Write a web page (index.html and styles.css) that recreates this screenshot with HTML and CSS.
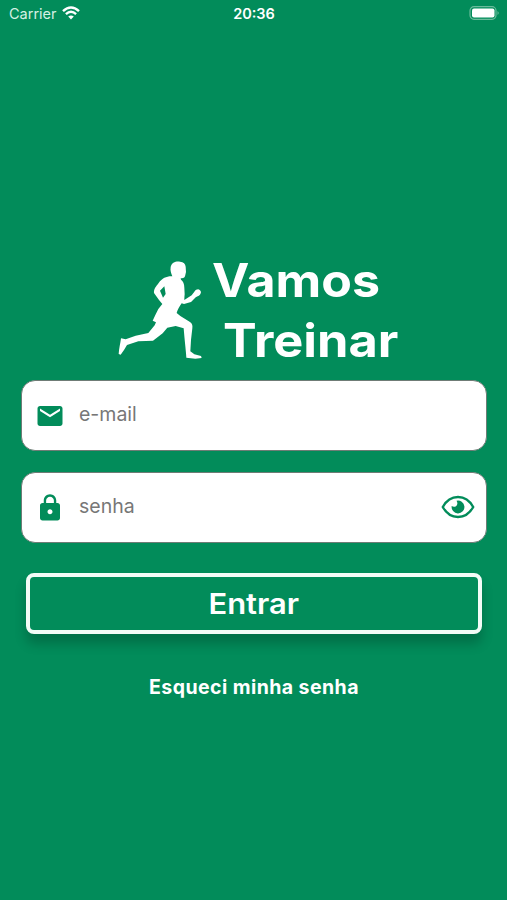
FILE: index.html
```html
<!DOCTYPE html>
<html lang="pt-BR">
<head>
    <meta charset="UTF-8">
    <meta name="viewport" content="width=device-width, initial-scale=1.0">
    <title>Vamos Treinar</title>
    <link rel="stylesheet" href="styles.css">
</head>
<body>
    <header class="status-bar">
        <div class="carrier">
            <span>Carrier</span>
            <svg class="wifi" viewBox="0 0 18 14">
                <path d="M1 5.2Q9-2.3 17 5.2" />
                <path d="M3.9 8.1Q9 3.5 14.1 8.1" />
                <path class="dot" d="M6.2 10.6Q9 8.2 11.8 10.6L9 13.6Z" />
            </svg>
        </div>
        <span class="time">20:36</span>
        <div class="battery-box">
            <svg class="battery" viewBox="0 0 31 14">
                <rect class="case" x="1" y=".7" width="26" height="12.6" rx="4" />
                <rect x="3" y="2.5" width="22.5" height="9" rx="2" />
                <path class="tip" d="M28.5 5Q31 7 28.5 9Z" />
            </svg>
        </div>
    </header>

    <main>
        <div class="logo">
            <svg class="runner" viewBox="0 0 252 294">
                <path d="M158 18C161 5 173 0 186 2C197 3 202 8 203 17L204 33L201 46C199 52 192 52 188 52L189 56C195 60 199 68 199 80L200 100C199 109 199 115 199 117L221 103L229 92C236 83 245 82 249 93C247 104 241 105 234 108L219 123L198 129L191 127L186 134C180 143 177 151 176 156L187 165L216 183C223 188 224 193 223 202L219 237L217 271L229 280L249 285L251 291L232 293L205 290L204 277C202 254 199 229 197 202L173 195L148 200L134 217L105 239L61 241L27 252L18 267L8 281L2 279C3 263 7 248 9 232L23 235L53 224L91 216L110 193L114 184L104 179L112 162L121 144L133 129L123 117L108 96C107 83 115 76 122 66C133 51 147 45 163 46C160 37 156 30 158 18ZM139 76L126 89L135 110L143 99Z" />
            </svg>
            <h1>
                <span class="vamos">Vamos</span>
                <span class="treinar">Treinar</span>
            </h1>
        </div>

        <form>
            <label class="field">
                <svg class="icon" viewBox="0 0 24 24">
                    <path d="M20 4H4c-1.1 0-1.99.9-1.99 2L2 18c0 1.1.9 2 2 2h16c1.1 0 2-.9 2-2V6c0-1.1-.9-2-2-2zm0 4l-8 5-8-5V6l8 5 8-5v2z" />
                </svg>
                <input type="email" placeholder="e-mail">
            </label>
            <label class="field">
                <svg class="icon lock" viewBox="0 0 24 24">
                    <path d="M18 8h-1V6c0-2.76-2.24-5-5-5S7 3.24 7 6v2H6c-1.1 0-2 .9-2 2v10c0 1.1.9 2 2 2h12c1.1 0 2-.9 2-2V10c0-1.1-.9-2-2-2zm-6 9c-1.1 0-2-.9-2-2s.9-2 2-2 2 .9 2 2-.9 2-2 2zm3.1-9H8.9V6c0-1.71 1.39-3.1 3.1-3.1 1.71 0 3.1 1.39 3.1 3.1v2z" />
                </svg>
                <input type="password" placeholder="senha">
                <svg class="eye" viewBox="0 0 34 24">
                    <path class="outline" d="M1.8 12C5.5 5.3 11 2 17 2S28.500 5.300 32.200 12C28.500 18.700 23 22 17 22S5.500 18.700 1.800 12Z" />
                    <path d="M15.500 5.800A6.400 6.400 0 1 1 10.700 11C12.600 12.300 14.800 11.800 15.800 10.200C16.700 8.700 16.500 7.200 15.500 5.800Z" />
                </svg>
            </label>
            <button type="button"><span>Entrar</span></button>
        </form>

        <a href="#">Esqueci minha senha</a>
    </main>
</body>
</html>
```

FILE: styles.css
```css
* {
    box-sizing: border-box;
}
body {
    margin: 0;
    height: 900px;
    overflow: hidden;
    background-color: #028c5a;
    color: #fff;
    font-family: Inter, sans-serif;
}
svg {
    display: block;
    flex: none;
}
.status-bar {
    display: grid;
    grid-template-columns: 1fr auto 1fr;
    align-items: center;
    height: 27px;
    padding: 0 7px 0 9px;
    font-size: 14.5px;
}
.carrier {
    display: flex;
    align-items: center;
    gap: 5px;
    color: #d5f0e4;
}
.wifi {
    width: 18px;
    height: 14px;
    margin-top: -1px;
    fill: none;
    stroke: #fff;
    stroke-width: 2.4;
}
.wifi .dot {
    fill: #fff;
    stroke: none;
}
.time {
    margin-left: -1px;
    font-weight: 600;
}
.battery-box {
    display: flex;
    justify-content: flex-end;
}
.battery {
    width: 31px;
    height: 14px;
    margin-top: -1px;
    fill: #fff;
}
.battery .case {
    fill: none;
    stroke: #6abb9b;
    stroke-width: 1.2;
}
.battery .tip {
    fill: #6abb9b;
}
main {
    display: flex;
    flex-direction: column;
    align-items: center;
    padding: 224px 20px 0 21px;
}
.logo {
    display: flex;
    align-items: center;
    gap: 10px;
    height: 120px;
    margin-left: 9px;
}
.runner {
    width: 84px;
    height: 98px;
    margin-top: -2px;
    fill: #fff;
}
h1 {
    width: 187px;
    margin: -2px 0 0;
    font-size: 46.5px;
    line-height: 60px;
    font-weight: 700;
    white-space: nowrap;
}
h1 span {
    display: block;
    transform-origin: left;
}
.vamos {
    transform: scaleX(1.077);
}
.treinar {
    margin-left: 11px;
    transform: scaleX(1.087);
}
form {
    width: 100%;
    margin-top: 9px;
}
.field {
    display: flex;
    align-items: center;
    height: 71px;
    margin-bottom: 21px;
    padding: 0 11px 0 13px;
    background-color: #fff;
    border: 1px solid #6f7c76;
    border-radius: 14px;
}
.icon {
    width: 30px;
    height: 30px;
    fill: #028c5a;
}
input {
    flex: 1;
    min-width: 0;
    margin: 0 0 3px 14px;
    padding: 0;
    border: none;
    outline: none;
    background: none;
    font-family: Inter, sans-serif;
    font-size: 19.5px;
}
input::placeholder {
    color: #777;
}
.eye {
    width: 34px;
    height: 24px;
    margin-top: -1px;
    fill: #028c5a;
}
.eye .outline {
    fill: none;
    stroke: #028c5a;
    stroke-width: 2.4;
}
button {
    display: block;
    width: 456px;
    height: 61px;
    margin: 30px auto 0 5px;
    padding: 0;
    background-color: #028c5a;
    border: 4px solid #f3fcf7;
    border-radius: 8px;
    box-shadow: 0 10px 12px rgba(0, 0, 0, 0.2);
    color: #fff;
    font-family: Inter, sans-serif;
    font-size: 28.5px;
    font-weight: 600;
}
button span {
    display: inline-block;
    transform: scaleX(1.085);
}
a {
    margin-top: 41px;
    color: #fff;
    font-size: 19.5px;
    font-weight: 700;
    letter-spacing: 0.43px;
    text-decoration: none;
}
```
